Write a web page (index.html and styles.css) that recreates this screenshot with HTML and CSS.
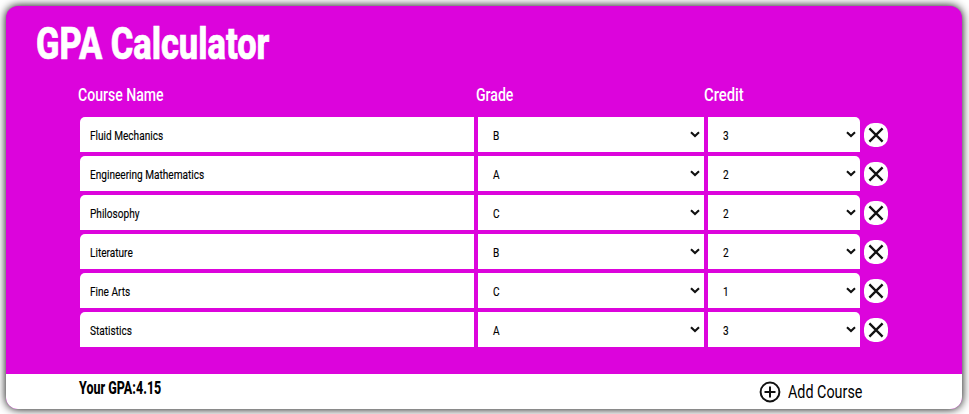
FILE: index.html
```html
<!DOCTYPE html>
<html lang="en">
<head>
<meta charset="utf-8">
<title>GPA Calculator</title>
<link rel="stylesheet" href="styles.css">
</head>
<body>
<svg width="0" height="0" class="defs">
  <symbol id="chev" viewBox="0 0 10 7"><path d="M1 1.3 5 5.1 9 1.3" fill="none" stroke="#111" stroke-width="2.1"/></symbol>
  <symbol id="cross" viewBox="0 0 24 24"><path d="M5.4 5.4 18.6 18.6M18.6 5.4 5.4 18.6" fill="none" stroke="#111" stroke-width="2.3"/></symbol>
</svg>
<main class="card">
  <h1 class="title"><span>GPA Calculator</span></h1>
  <div class="heads"><span class="h-name">Course Name</span><span class="h-grade">Grade</span><span class="h-credit">Credit</span></div>
  <div class="rows" id="rows"></div>
  <footer class="footer">
    <strong class="gpa">Your GPA:4.15</strong>
    <div class="add">
      <svg class="plus" viewBox="0 0 22 22"><circle cx="11" cy="11" r="9.4"/><path d="M11 5.5v11M5.5 11h11"/></svg>
      <span class="add-text">Add Course</span>
    </div>
  </footer>
</main>
<script src="app.js"></script>
</body>
</html>
```
FILE: styles.css
```css
* { box-sizing: border-box; }
body {
  margin: 0;
  padding: 6px 7px 5px 6px;
  height: 414px;
  overflow: hidden;
  background: #fff;
  font-family: Roboto, "Liberation Sans", sans-serif;
}
.defs { display: none; }
.card {
  height: 403px;
  border-radius: 12px;
  overflow: hidden;
  background: #dc04dc;
  box-shadow: 0 0 10px #000;
  display: flex;
  flex-direction: column;
}
.title {
  margin: 0;
  padding: 12px 0 0 30px;
  height: 75px;
  font-size: 45px;
  font-weight: 800;
  line-height: 52px;
  color: #fff;
  -webkit-text-stroke: .7px #fff;
}
span, strong { white-space: nowrap; }
.title span { display: inline-block; transform-origin: 0 50%; transform: scaleX(.765); }
.heads {
  display: grid;
  grid-template-columns: 398px 227px 150px;
  padding-left: 72px;
  height: 36px;
  color: #fff;
  font-size: 19px;
  font-weight: 500;
  line-height: 28px;
}
.heads span { transform-origin: 0 50%; transform: scaleX(.74); }
.heads .h-credit { transform: scaleX(.78); margin-left: 0.5px; }
.rows { padding-left: 74px; height: 257px; display: flex; flex-direction: column; gap: 4px; }
.row {
  display: grid;
  grid-template-columns: 394px 226px 152px 24px;
  column-gap: 4px;
  height: 35px;
  align-items: center;
}
.cell {
  height: 35px;
  background: #fff;
  color: #000;
  font-size: 13px;
  display: flex;
  align-items: center;
  justify-content: space-between;
  padding: 2px 4px 0 14.5px;
}
.cell span { transform-origin: 0 50%; transform: scaleX(.775); -webkit-text-stroke: .15px #000; }
.cell:first-child { padding-left: 10px; border-top-left-radius: 5px; }
.cell:nth-child(3) { border-top-right-radius: 5px; }
.cell svg { width: 10px; height: 7px; margin-top: -2px; }
.del { width: 24px; height: 24px; border: 0; padding: 0; border-radius: 10px; background: #fff; }
.del svg { display: block; width: 24px; height: 24px; }
.footer {
  height: 35px;
  background: #fff;
  color: #000;
  display: flex;
  justify-content: space-between;
  padding: 0 0 0 73px;
}
.gpa { font-size: 17.5px; font-weight: 800; line-height: 29px; transform-origin: 0 50%; transform: scaleX(.715); }
.add { width: 203px; display: flex; align-items: center; gap: 7px; }
.plus { width: 22px; height: 22px; fill: none; stroke: #111; stroke-width: 2; }
.add-text { font-size: 19px; line-height: 35px; transform-origin: 0 50%; transform: scaleX(.755); }
```
FILE: app.js
```js
const courses = [
  ["Fluid Mechanics", "B", 3],
  ["Engineering Mathematics", "A", 2],
  ["Philosophy", "C", 2],
  ["Literature", "B", 2],
  ["Fine Arts", "C", 1],
  ["Statistics", "A", 3]
];
const chevron = '<svg><use href="#chev"/></svg>';
document.getElementById("rows").innerHTML = courses.map(([name, grade, credit]) =>
  `<div class="row"><div class="cell"><span>${name}</span></div>` +
  `<div class="cell"><span>${grade}</span>${chevron}</div>` +
  `<div class="cell"><span>${credit}</span>${chevron}</div>` +
  `<button class="del" aria-label="Remove"><svg><use href="#cross"/></svg></button></div>`
).join("");
```
